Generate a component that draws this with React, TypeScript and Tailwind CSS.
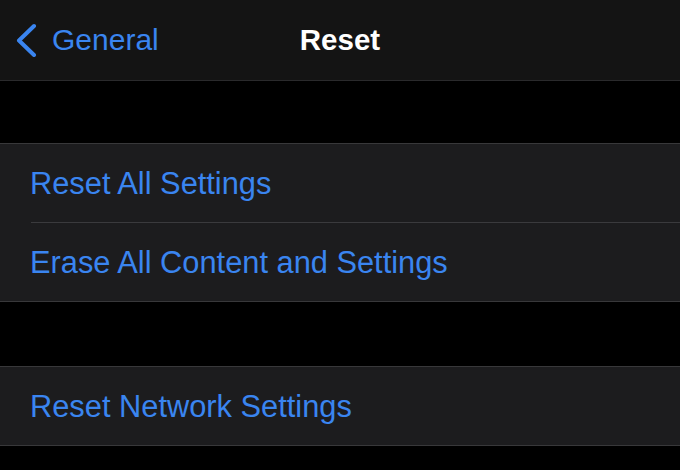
const blue = 'text-[#3a85f0]'

function Row({ label, last }: { label: string; last?: boolean }) {
  return (
    <div className="flex flex-col">
      <div className={`flex h-[78px] items-center pl-[30px] pt-[3px] text-[30.8px] ${blue}`}>
        {label}
      </div>
      {!last && <div className="ml-[31px] h-px bg-[#3a3a3d]" />}
    </div>
  )
}

export default function App() {
  return (
    <div className="h-[470px] w-[680px] overflow-hidden bg-black font-['Liberation_Sans',Arial,sans-serif]">
      {/* Nav bar */}
      <div className="relative flex h-[81px] items-center border-b border-[#2a2a2c] bg-[#141414]">
        <div className={`flex items-center gap-[14px] pl-[14px] ${blue}`}>
          <svg width="24" height="34" viewBox="0 0 24 34" fill="none">
            <polyline
              points="20,3 5,17.5 20,32"
              stroke="currentColor"
              strokeWidth="4"
              strokeLinecap="round"
              strokeLinejoin="round"
            />
          </svg>
          <span className="text-[30px] leading-none">General</span>
        </div>
        <div className="absolute inset-x-0 top-0 flex h-full items-center justify-center pointer-events-none">
          <span className="text-[29.5px] font-bold leading-none text-white">Reset</span>
        </div>
      </div>

      <div className="h-[62px]" />

      <div className="border-y border-[#38383a] bg-[#1c1c1e]">
        <Row label="Reset All Settings" />
        <Row label="Erase All Content and Settings" last />
      </div>

      <div className="h-[64px]" />

      <div className="border-y border-[#38383a] bg-[#1c1c1e]">
        <Row label="Reset Network Settings" last />
      </div>
    </div>
  )
}
